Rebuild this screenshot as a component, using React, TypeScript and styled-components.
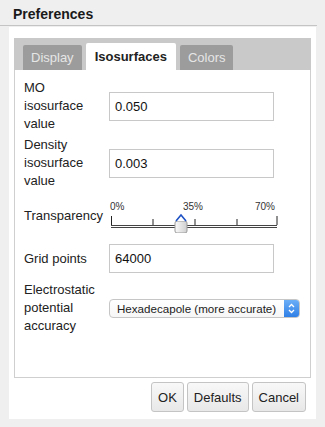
import * as React from 'react';
import styled, { createGlobalStyle } from 'styled-components';

const GlobalStyle = createGlobalStyle`
  html, body {
    margin: 0;
    padding: 0;
    background: #efefef;
    font-family: "Liberation Sans", Arial, Helvetica, sans-serif;
    color: #222;
  }
`;

const Dialog = styled('div')`
  width: 325px;
  height: 427px;
  box-sizing: border-box;
  background: #efefef;
  display: flex;
  flex-direction: column;
`;

const TitleBar = styled('div')`
  height: 26px;
  box-sizing: border-box;
  padding: 6px 0 0 13px;
  margin: 0 8px 0 0;
  font-size: 14px;
  font-weight: bold;
  color: #1a1a1a;
  border-bottom: 1px solid #c4c4c4;
`;

const Body = styled('div')`
  margin: 1px 9px 0 9px;
  height: 392px;
  background: #fff;
  padding: 11px 5px 0 5px;
  box-sizing: border-box;
  display: flex;
  flex-direction: column;
`;

const TabStrip = styled('div')`
  background: #c9c9c9;
  height: 32px;
  box-sizing: border-box;
  padding: 0 0 0 9px;
  display: flex;
  align-items: flex-end;
  gap: 4px;
`;

const Tab = styled('div')<{ $active?: boolean }>`
  height: ${p => (p.$active ? 27 : 25)}px;
  box-sizing: border-box;
  padding: 0 ${p => (p.$active ? 9 : 8)}px;
  display: flex;
  align-items: center;
  font-size: 13px;
  border-radius: 2px 2px 0 0;
  background: ${p => (p.$active ? '#fff' : '#9c9c9c')};
  color: ${p => (p.$active ? '#222' : '#e6e6e6')};
  font-weight: ${p => (p.$active ? 'bold' : 'normal')};
`;

const Panel = styled('div')`
  height: 308px;
  box-sizing: border-box;
  border: 1px solid #cfcfcf;
  border-top: none;
  padding: 9px 0 0 9px;
  display: flex;
  flex-direction: column;
`;

const Row = styled('div')<{ $gap?: number }>`
  display: flex;
  align-items: center;
  margin-bottom: ${p => p.$gap ?? 0}px;
`;

const Label = styled('div')`
  width: 85px;
  font-size: 13px;
  line-height: 18px;
  color: #222;
`;

const TextInput = styled('div')`
  width: 165px;
  height: 29px;
  box-sizing: border-box;
  border: 1px solid #c8c8c8;
  padding: 0 5px;
  display: flex;
  align-items: center;
  font-size: 13px;
  color: #111;
`;

const SliderBox = styled('div')`
  position: relative;
  width: 168px;
  height: 34px;
  margin-left: 1px;
`;

const TickLabel = styled('span')<{ $left: number }>`
  position: absolute;
  top: 2px;
  left: ${p => p.$left}px;
  font-size: 10px;
  color: #333;
`;

const Select = styled('div')`
  width: 191px;
  height: 19px;
  box-sizing: border-box;
  border: 1px solid #c6c6c6;
  border-radius: 4px;
  display: flex;
  align-items: center;
  font-size: 11.6px;
  color: #222;
  overflow: hidden;
  background: linear-gradient(#fff, #f6f6f6);
`;

const SelectText = styled('span')`
  flex: 1;
  padding-left: 7px;
  white-space: nowrap;
`;

const Stepper = styled('span')`
  width: 15px;
  height: 100%;
  background: linear-gradient(#6aaef7, #2f7fe6);
  display: flex;
  align-items: center;
  justify-content: center;
`;

const Footer = styled('div')`
  display: flex;
  justify-content: flex-end;
  gap: 3px;
  padding: 4px 5px 0 0;
`;

const Button = styled('div')`
  height: 30px;
  box-sizing: border-box;
  padding: 0 6px;
  display: flex;
  align-items: center;
  font-size: 13px;
  color: #222;
  border: 1px solid #c4c4c4;
  border-radius: 3px;
  background: linear-gradient(#f8f8f8, #e8e8e8);
`;

const Slider = () => (
  <SliderBox>
    <TickLabel $left={0}>0%</TickLabel>
    <TickLabel $left={73}>35%</TickLabel>
    <TickLabel $left={145}>70%</TickLabel>
    <svg width="168" height="34" viewBox="0 0 168 34" style={{ position: 'absolute', left: 0, top: 0 }}>
      <path d="M1.5 17v9M167 17v9M43 20v6M85 20v6M127 20v6" stroke="#222" strokeWidth="1" fill="none" />
      <path d="M1 26.5h166M1 28.5h166" stroke="#444" strokeWidth="1" />
      <rect x="65" y="22" width="12" height="12" rx="2" fill="url(#thumb)" stroke="#9a9a9a" />
      <path d="M66 22 L71 16 L76 22" fill="#fff" stroke="#1f52c4" strokeWidth="1.6" />
      <defs>
        <linearGradient id="thumb" x1="0" x2="1">
          <stop offset="0" stopColor="#fafafa" />
          <stop offset="1" stopColor="#cfcfcf" />
        </linearGradient>
      </defs>
    </svg>
  </SliderBox>
);

export default function App() {
  return (
    <Dialog>
      <GlobalStyle />
      <TitleBar>Preferences</TitleBar>
      <Body>
        <TabStrip>
          <Tab>Display</Tab>
          <Tab $active>Isosurfaces</Tab>
          <Tab>Colors</Tab>
        </TabStrip>
        <Panel>
          <Row $gap={3}>
            <Label>MO<br />isosurface<br />value</Label>
            <TextInput>0.050</TextInput>
          </Row>
          <Row $gap={9}>
            <Label>Density<br />isosurface<br />value</Label>
            <TextInput>0.003</TextInput>
          </Row>
          <Row $gap={11}>
            <Label>Transparency</Label>
            <Slider />
          </Row>
          <Row $gap={8}>
            <Label>Grid points</Label>
            <TextInput>64000</TextInput>
          </Row>
          <Row>
            <Label>Electrostatic<br />potential<br />accuracy</Label>
            <Select>
              <SelectText>Hexadecapole (more accurate)</SelectText>
              <Stepper>
                <svg width="7" height="11" viewBox="0 0 7 11">
                  <path d="M1 4L3.5 1.5L6 4M1 7L3.5 9.5L6 7" stroke="#fff" strokeWidth="1.3" fill="none" />
                </svg>
              </Stepper>
            </Select>
          </Row>
        </Panel>
        <Footer>
          <Button>OK</Button>
          <Button>Defaults</Button>
          <Button>Cancel</Button>
        </Footer>
      </Body>
    </Dialog>
  );
}
